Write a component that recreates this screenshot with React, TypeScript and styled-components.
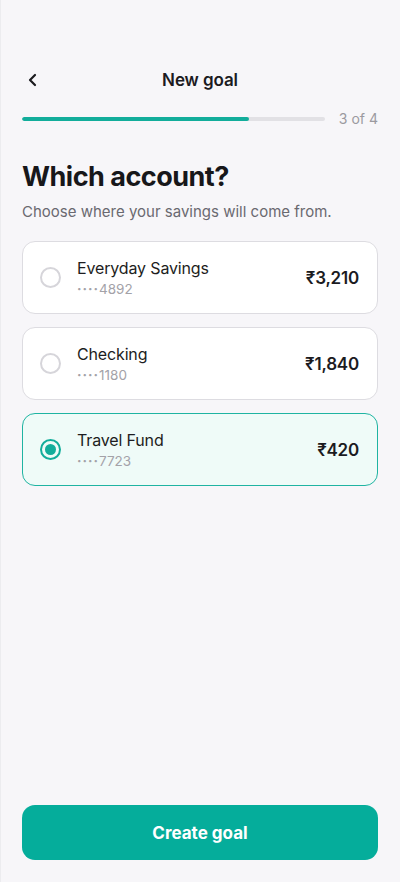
import React, { useState } from "react";
import styled, { createGlobalStyle } from "styled-components";

const Global = createGlobalStyle`
  html, body { margin: 0; padding: 0; background: #f7f6f9; }
  body { font-family: Inter, "Noto Sans", sans-serif; -webkit-font-smoothing: antialiased; }
  * { box-sizing: border-box; }
`;

const Screen = styled.div`
  width: 400px;
  height: 882px;
  display: flex;
  flex-direction: column;
  padding: 58px 22px 22px;
  background: #f7f6f9;
  box-shadow: inset 1px 0 0 #ececef;
`;

const Header = styled.div`
  display: grid;
  grid-template-columns: 40px 1fr 40px;
  align-items: center;
  height: 44px;
`;

const BackButton = styled.button`
  border: 0;
  background: none;
  padding: 0;
  display: flex;
  align-items: center;
  justify-content: flex-start;
  padding-left: 4px;
  color: #1b1b1f;
  cursor: pointer;
`;

const Title = styled.h1`
  margin: 0;
  text-align: center;
  font-size: 17px;
  font-weight: 600;
  color: #1b1b1f;
  letter-spacing: -0.1px;
`;

const ProgressRow = styled.div`
  display: flex;
  align-items: center;
  gap: 14px;
  margin-top: 8px;
`;

const Track = styled.div`
  flex: 1;
  height: 4px;
  border-radius: 2px;
  background: #e2e1e5;
  overflow: hidden;
`;

const Fill = styled.div`
  height: 100%;
  border-radius: 2px;
  background: #12ad9b;
`;

const StepText = styled.span`
  font-size: 14px;
  color: #9b9aa0;
`;

const Heading = styled.h2`
  margin: 33px 0 0;
  font-size: 27px;
  font-weight: 700;
  color: #17171a;
  letter-spacing: -0.5px;
  line-height: 34px;
`;

const Subtitle = styled.p`
  margin: 8px 0 0;
  font-size: 15px;
  color: #6a6970;
  line-height: 20px;
`;

const List = styled.div`
  display: flex;
  flex-direction: column;
  gap: 13px;
  margin-top: 19px;
`;

const Card = styled.button<{ $selected: boolean }>`
  display: flex;
  align-items: center;
  height: 73px;
  padding: 0 18px 0 17px;
  border-radius: 13px;
  border: 1.5px solid ${(p) => (p.$selected ? "#1fb4a2" : "#dddce1")};
  background: ${(p) => (p.$selected ? "#effbf8" : "#ffffff")};
  text-align: left;
  font-family: inherit;
  cursor: pointer;
  width: 100%;
`;

const Radio = styled.span<{ $selected: boolean }>`
  width: 21px;
  height: 21px;
  border-radius: 50%;
  border: 2px solid ${(p) => (p.$selected ? "#12ad9b" : "#d6d5da")};
  display: flex;
  align-items: center;
  justify-content: center;
  flex-shrink: 0;
  &::after {
    content: "";
    width: 11px;
    height: 11px;
    border-radius: 50%;
    background: #12ad9b;
    display: ${(p) => (p.$selected ? "block" : "none")};
  }
`;

const Info = styled.div`
  flex: 1;
  display: flex;
  flex-direction: column;
  margin-left: 16px;
  gap: 1px;
`;

const Name = styled.span`
  font-size: 16px;
  color: #1d1d21;
  line-height: 22px;
  letter-spacing: -0.15px;
`;

const Masked = styled.span`
  font-size: 13.5px;
  color: #a3a2a8;
  line-height: 18px;
`;

const Dots = styled.span`
  letter-spacing: 1px;
  font-weight: 700;
`;

const Amount = styled.span`
  font-size: 17px;
  font-weight: 600;
  color: #1b1b1f;
  letter-spacing: -0.2px;
`;

const Spacer = styled.div`
  flex: 1;
`;

const PrimaryButton = styled.button`
  height: 55px;
  border: 0;
  border-radius: 13px;
  background: #05ad9b;
  color: #ffffff;
  font-family: inherit;
  font-size: 17px;
  font-weight: 700;
  cursor: pointer;
  width: 100%;
`;

const accounts = [
  { name: "Everyday Savings", last: "4892", amount: "₹3,210" },
  { name: "Checking", last: "1180", amount: "₹1,840" },
  { name: "Travel Fund", last: "7723", amount: "₹420" },
];

export default function App() {
  const [selected, setSelected] = useState(2);
  return (
    <>
      <Global />
      <Screen>
        <Header>
          <BackButton aria-label="Back">
            <svg width="14" height="16" viewBox="0 0 14 16" fill="none">
              <path d="M9 3L4 8l5 5" stroke="#1b1b1f" strokeWidth="2.2" strokeLinecap="round" strokeLinejoin="round" />
            </svg>
          </BackButton>
          <Title>New goal</Title>
          <span />
        </Header>
        <ProgressRow>
          <Track>
            <Fill style={{ width: "75%" }} />
          </Track>
          <StepText>3 of 4</StepText>
        </ProgressRow>
        <Heading>Which account?</Heading>
        <Subtitle>Choose where your savings will come from.</Subtitle>
        <List>
          {accounts.map((a, i) => (
            <Card key={a.name} $selected={selected === i} onClick={() => setSelected(i)}>
              <Radio $selected={selected === i} />
              <Info>
                <Name>{a.name}</Name>
                <Masked>
                  <Dots>····</Dots>
                  {a.last}
                </Masked>
              </Info>
              <Amount>{a.amount}</Amount>
            </Card>
          ))}
        </List>
        <Spacer />
        <PrimaryButton>Create goal</PrimaryButton>
      </Screen>
    </>
  );
}
